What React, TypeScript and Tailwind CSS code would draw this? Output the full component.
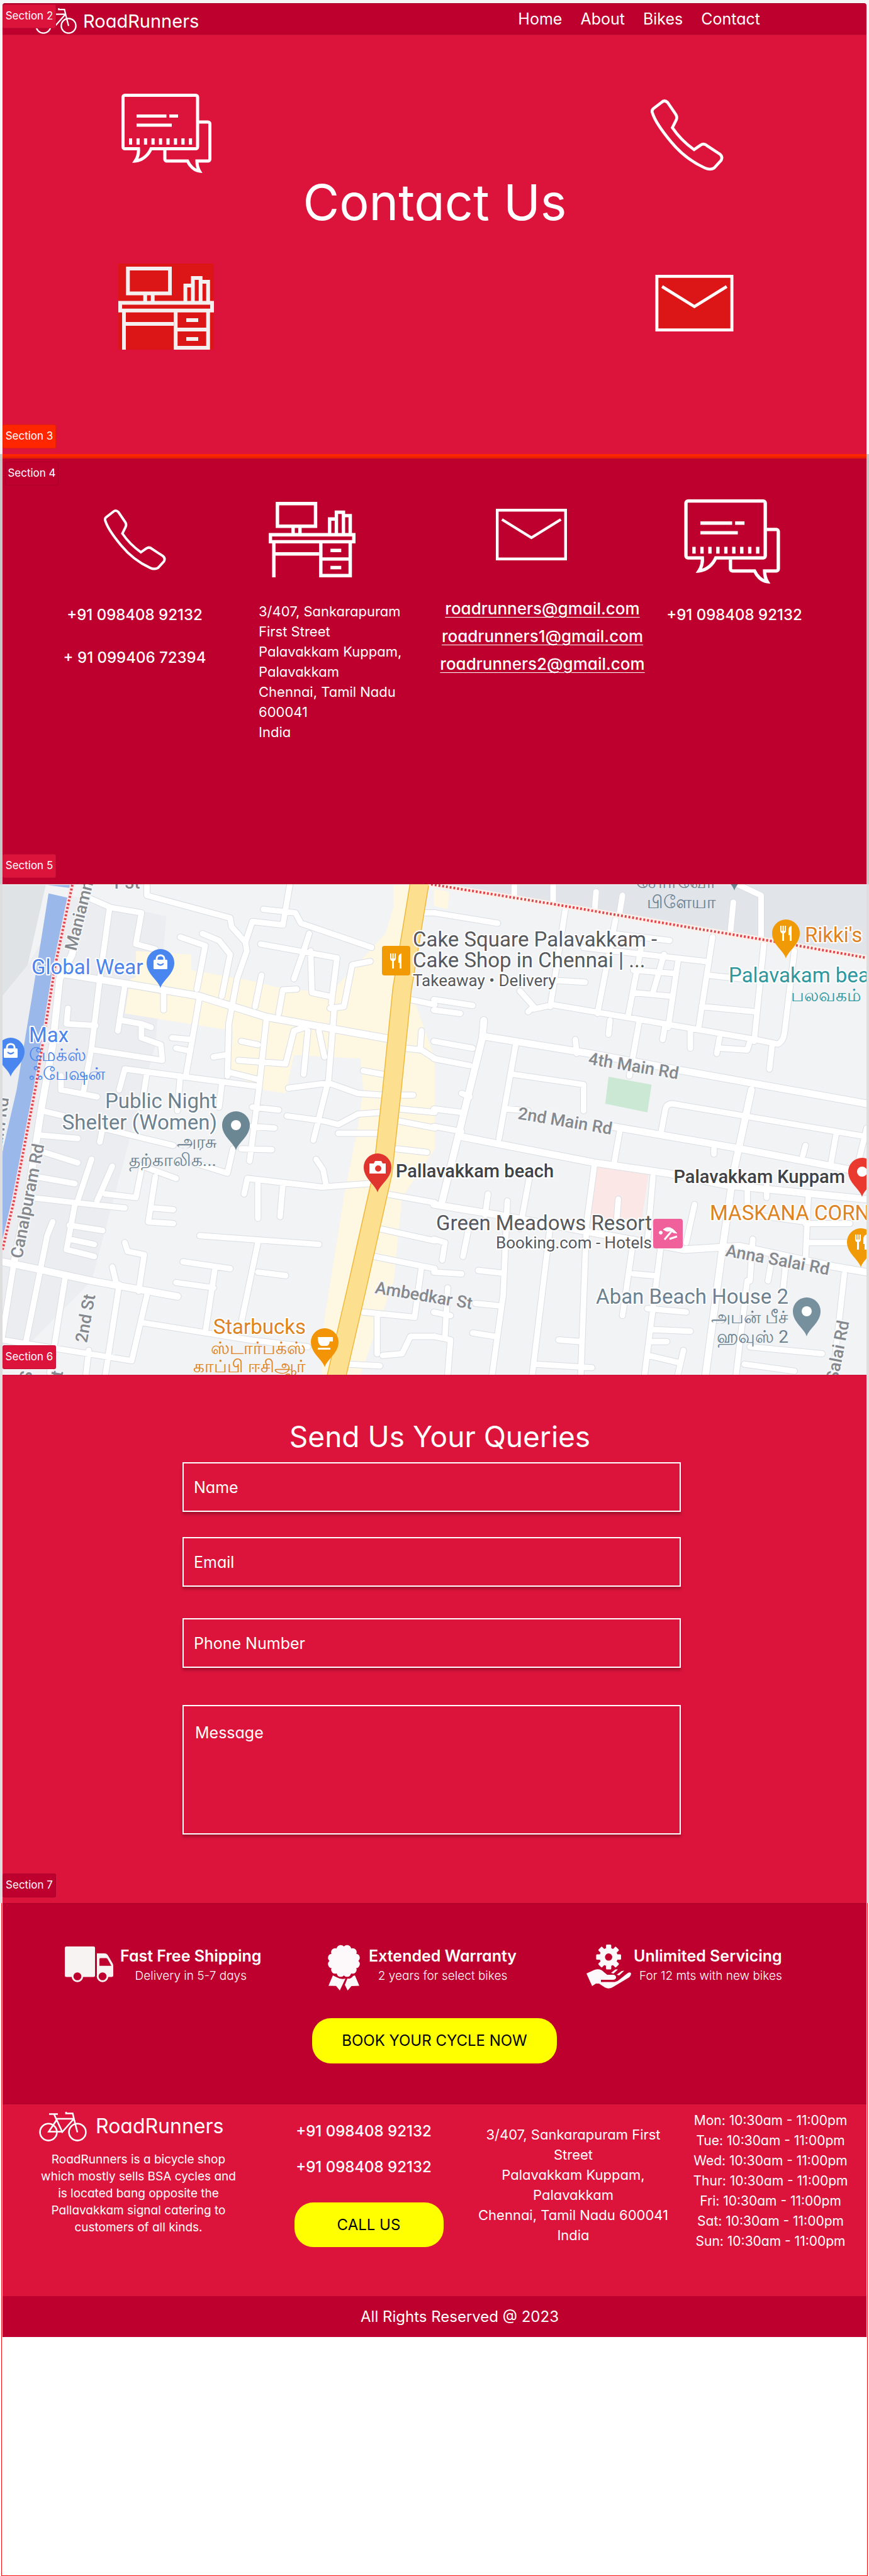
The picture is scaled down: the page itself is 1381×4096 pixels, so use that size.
import React from "react";

const FONT = "font-['Inter','Liberation_Sans',sans-serif] [font-feature-settings:'cv11']";

function Tag({ children, className }: { children: React.ReactNode; className: string }) {
  return (
    <span
      className={`absolute z-10 flex h-[38px] w-[85px] items-center justify-center rounded-[3px] border border-black/10 text-[17px] font-normal whitespace-nowrap text-white [font-feature-settings:normal] ${className}`}
    >
      {children}
    </span>
  );
}

function Bike({ className }: { className: string }) {
  return (
    <svg viewBox="0 0 76 48" className={className} fill="none" stroke="currentColor" strokeWidth="2.6" aria-hidden="true">
      <circle cx="15" cy="33.2" r="13.4" />
      <circle cx="61" cy="33.2" r="13.4" />
      <path d="M16 4.5H30M24 5L37 33L55 12.5M26 12H55.5M28.5 13L15.5 32.5H37M43 1V3.5H53.5L56 14L61 33.5" />
    </svg>
  );
}

function Chat({ className }: { className: string }) {
  return (
    <svg viewBox="0 0 143 126" className={className} fill="none" stroke="currentColor" strokeWidth="5" aria-hidden="true">
      <path d="M27 87.5H5.5a3 3 0 0 1-3-3V5.5a3 3 0 0 1 3-3H118a3 3 0 0 1 3 3V84.5a3 3 0 0 1-3 3H47C43 97 34 106 22 107C26 101 27.5 94 27 87.5Z" />
      <path d="M123 45H137.5a3 3 0 0 1 3 3V104a3 3 0 0 1-3 3H120C120 113 121 118 124 123C115 122 108 114 105 107H72a3 3 0 0 1-3-3V90" />
      <path d="M24 35.5H71.5M76 35.5H90M24 50H80" />
      <path d="M12 76H113" strokeWidth="10" strokeDasharray="5 6.9" />
    </svg>
  );
}

function Phone({ className }: { className: string }) {
  return (
    <svg viewBox="0 0 116 114" className={className} fill="none" stroke="currentColor" strokeWidth="4.6" aria-hidden="true">
      <path d="M17 5Q22 0 27 5L40 24Q43 29 40 34L34.5 45Q48 65 69 80L79 73Q85 69 90 74L110 87Q115 91 112 97L101 109Q95 113 86 109Q55 95 32 67Q8 38 3 22Q1 18 4 15Z" />
    </svg>
  );
}

function Desk({ className, viewBox }: { className: string; viewBox: string }) {
  return (
    <svg viewBox={viewBox} className={className} fill="none" stroke="currentColor" strokeWidth="6" aria-hidden="true">
      <path d="M15.3 8H82V47.5H15.3ZM42.7 50V60M54.7 50V60" />
      <path d="M106.6 60V35H118.5M118.5 60V23H130.8V60M130.8 29H142.7V60" />
      <path d="M3 62.5H149V74.7H3ZM9 77V137M91.2 77V134H142.7V77M12 96H88M94 105H140M108 90H127M108 120H127" />
    </svg>
  );
}

function Mail({ className }: { className: string }) {
  return (
    <svg viewBox="0 0 113 82" className={className} fill="none" stroke="currentColor" strokeWidth="4.4" aria-hidden="true">
      <path d="M2.2 2.2H110.8V79.8H2.2ZM9.7 17L56.5 46L103.3 17" />
    </svg>
  );
}

function Truck() {
  return (
    <svg viewBox="0 0 77 57" className="mt-[3px] h-[57px] w-[77px]" fill="#f8f3f3" aria-hidden="true">
      <rect width="48" height="48.5" rx="2.5" />
      <path
        fillRule="evenodd"
        d="M51 11H63Q67 11 69 15L76 27Q77 29 77 31V46Q77 48.5 74 48.5H51ZM56.5 18.5Q55 18.5 55 20V30.7H74L68 20Q67 18.5 66 18.5Z"
      />
      <circle cx="20" cy="47.5" r="9.2" />
      <circle cx="60" cy="47.5" r="9.2" />
      <circle cx="20" cy="47.5" r="6.3" fill="#be002f" />
      <circle cx="60" cy="47.5" r="6.3" fill="#be002f" />
    </svg>
  );
}

function Rosette() {
  const lobes = Array.from({ length: 12 }, (_, i) => (i * Math.PI) / 6 + Math.PI / 12);
  return (
    <svg viewBox="0 0 53 73" className="h-[73px] w-[53px]" fill="#fdf8fa" aria-hidden="true">
      <circle cx="26.5" cy="26" r="22.5" />
      {lobes.map((a) => (
        <circle key={a} cx={26.5 + 19.5 * Math.cos(a)} cy={26 + 19.5 * Math.sin(a)} r="6.5" />
      ))}
      <path d="M9 49L2 65.5L14 65.8L20 73L29 54Q22 56 15 52ZM44 49L51 65.5L38.5 66L32.5 73L28 64L32 54Q38 55 41 50Z" />
    </svg>
  );
}

function HandGear() {
  return (
    <svg viewBox="0 0 71 70" className="h-[70px] w-[71px]" aria-hidden="true">
      <g fill="#fdf8fa">
        {[0, 45, 90, 135].map((a) => (
          <rect key={a} x="31" y="0" width="8.4" height="39.6" rx="1.5" transform={`rotate(${a} 35.2 19.8)`} />
        ))}
        <circle cx="35.2" cy="19.8" r="14.5" />
        <path d="M0 46L12 40.5Q22 37 28 44L33 48H43Q47.5 49 47 53Q46 56 42 56H23V59.5H45Q49 59 52 56L66 45Q70 43 71 46Q71 49 68 52L43 67Q36 72 29 68L20 62H15L9 66Z" />
        <path d="M39 45L46 39.5H50L43 46ZM48 48L56 42L60 41.5L52 49Z" />
      </g>
      <circle cx="35.2" cy="19.8" r="5.8" fill="#be002f" />
    </svg>
  );
}

function Pin({ x, y, color, children }: { x: number; y: number; color: string; children?: React.ReactNode }) {
  return (
    <g transform={`translate(${x} ${y})`}>
      <path d="M0 40C-3 28 -22 18 -22 0A22 22 0 0 1 22 0C22 18 3 28 0 40Z" fill={color} />
      {children ?? <circle r="8" fill="#fff" />}
    </g>
  );
}

const Bag = () => (
  <g fill="none" stroke="#fff" strokeWidth="3">
    <rect x="-11" y="-5" width="22" height="15" rx="1.5" fill="#fff" stroke="none" />
    <path d="M-6 -5V-7A6 5 0 0 1 6 -7V-5" />
    <path d="M-5 1Q0 6 5 1" stroke="#4a86f0" strokeWidth="2.2" />
  </g>
);

const Fork = () => (
  <path
    d="M-9 -12V-4Q-9 -1 -6 0V12H-3V0Q0 -1 0 -4V-12H-2V-4H-3.5V-12H-5.5V-4H-7V-12ZM9 -12Q4 -11 4 -4V3H6V12H9Z"
    fill="#fff"
  />
);

const STREETS_WEST =
  "M300 130L400 165L510 180L490 270L560 285M395 165L360 370M530 100V130L830 195L835 220L885 265L910 205L1020 215L1045 100M950 170L1065 180L1085 210L1340 280M940 270L1215 310L1195 440M1115 240L1095 290L1060 370M1120 290L1125 410L1185 420M1335 320L1270 330L1240 450L1190 455M885 265L890 290L855 370L825 500L820 650M650 250L740 275L710 400M730 240L790 260L830 300L800 420M590 400V460M943 360L920 450M1070 400L1020 402L1005 470M360 370L330 570L300 700M450 390L425 520M245 455L240 500L345 505M440 490L510 500L545 510M510 500V540L580 560L585 605L340 575M720 420L690 560L670 650M620 540L690 545M635 570L685 578M430 690L450 630L930 680M530 640L510 740M650 650L640 750M800 670L790 740M960 490L935 680L900 895M870 550L930 560M860 605L1030 615L1060 520L1100 510M1205 460L1185 660L1130 835M1110 520L1095 645M1150 520L1170 595M1040 685L1185 670L1290 700L1380 705M1035 765L1170 780L1220 790L1290 760L1375 755M1220 815H1360M770 595L810 590M830 640L930 660M150 750L230 765M140 820L280 830M220 650V690L350 710M360 840L370 800L520 830L625 850M160 870L280 900M130 940L270 960M110 1000L330 1020L450 1030M270 1020L240 1150L340 1170M250 1080L370 1095M250 1120L340 1135M330 890L280 1010M405 910L350 1010M510 920L490 1000L380 990M560 940L535 1070L625 1075M550 1030L625 1035M480 900L635 945M840 860L820 930L700 900M870 860L980 862M910 740L1005 748M910 795L990 800M720 1110L1150 1135M930 1130L870 1360M930 1215L1030 1225M450 1130L460 1155L520 1165L500 1270M405 1200L420 1250M660 1185L830 1205M635 1245L770 1260M775 1205L740 1390M190 1070L170 1110L90 1430M235 1230L180 1505M430 1250L380 1510M530 1280L475 1470L8 1410M320 1440L310 1510M50 1190L8 1400M510 1360L900 1410L1110 1430M880 990L892 945L1160 970L1330 960M930 960V1060M1020 960L1010 1055M1140 890L1165 920L1175 960M1480 430L1568 445M1530 180H1568M1460 570L1520 575L1568 600M1520 520L1515 575M1450 705H1490M1440 745L1568 755M1440 780L1568 800M1430 860L1540 870M1395 990L1568 1015M1370 1090L1568 1125M1350 1170L1568 1205M1310 1330L1495 1345L1520 1200M1360 1340V1450M1568 1400L1480 1400L1450 1450L1380 1455M1250 1480L1370 1485M1310 635L1380 645";

const STREETS_EAST =
  "M0 180L230 210M475 165L420 450M655 200L590 470M540 280L980 320M640 240L850 260M750 270L700 480M1005 250L955 510M1190 270L1155 550M990 360L1170 375M965 450L1160 465M720 410L850 420M720 345L870 355M830 300L790 410M880 320L845 510M310 405L360 450L340 465M360 457L430 445L760 490L1160 545L1240 558Q1262 550 1265 520L1300 290M440 375L545 380M0 430L140 447M0 460L95 470M635 490L630 530M740 495L705 650M835 500L825 545M925 520V570M1030 540L1020 585M1035 570L1130 575L1140 550M1220 560L1210 630M510 545L515 585M0 550L140 570M0 600L130 620M0 745L100 755M0 795L100 810M100 700L130 710M295 560L235 830M285 645L540 675V750M260 745L340 750M820 810L835 745Q840 730 860 730L1561 825M670 810L650 900M1450 820L1430 910M1561 800L1530 900M1340 850L1330 880M1010 860V875M345 940L310 1090M265 1010L250 1280L210 1510M195 990L185 1050M130 1070L105 1170M0 1120L40 1130L30 1180M0 1215L100 1220M420 1080L355 1510M580 900L550 1080L530 1510M665 1005L660 1060M790 940L770 1130M720 1120L680 1340M720 1220L790 1225M820 1130L760 1510M940 1020L910 1130M1060 960L1145 970M1060 1040L1340 1070M1130 980V1040M1200 960V1000M1350 1000L1340 1180M1150 1120L1140 1240M1220 1170L1205 1240M1270 1180L1260 1260M1340 1075H1500M1350 1130H1500M1480 1220L1440 1510M160 1210L250 1218M140 1390L220 1400M150 1305L240 1312M360 1480L570 1490M450 1410L530 1415M770 1320L910 1330M780 1380L925 1385M780 1415H840M775 1455L880 1475M900 1440L880 1510M1130 1240L1090 1510M0 1330L60 1340M50 1260L40 1400M0 1400L60 1410L50 1510M1140 1430L1400 1450M1120 1480L1300 1500M430 100V150M290 100V130M585 120L580 170M680 130L670 180M1080 150L1070 230M1100 100L1180 130V250";

const MAJOR_WEST =
  "M310 100L260 300L215 370L190 560L150 740L100 1000L50 1190M225 355L460 385L720 420L960 480L1395 542M8 1185L130 1205L330 1240L640 1285";
const MAJOR_EAST =
  "M180 490L175 540L30 1010M175 535L560 585L900 635L1561 730M100 825L580 900L840 930L1060 965L1561 1005M640 795L1110 860L1500 920M0 1020L230 1050L800 1135L900 1150L1100 1140L1450 1200L1561 1215M1145 690L1080 930L1040 1150L980 1510";

const WEST = "matrix(.4407 0 0 .5521 -4 -54)";
const EAST = "matrix(.4407 0 0 .5521 685.5 -54)";

function CityMap() {
  return (
    <svg
      viewBox="0 0 1373 780"
      className="block h-auto w-full font-['Roboto','Noto_Sans',sans-serif]"
      role="img"
      aria-label="Map of Palavakkam"
    >
      <rect width="1373" height="780" fill="#f1f3f5" />
      {/* tinted blocks, canal and sea front */}
      <g transform={WEST}>
        <path d="M8 100H165L100 330L8 640Z" fill="#dfe3e6" />
        <path d="M8 420L100 330L250 130L600 190L560 560L330 1240L8 1500Z" fill="#ebedf0" />
        <path
          d="M490 290L690 300L690 345L900 375L1000 395L1190 412L1390 240L1420 160V100H1500L1400 560L1380 700L1310 690L1300 600L1060 590L1030 700L950 690L830 640L840 520L450 470L470 370L490 365Z"
          fill="#fef7e2"
        />
        <path d="M1400 690L1310 690L1290 800L1240 1000L1170 1350L1160 1510H1300L1420 1240L1450 1000L1568 860V600L1480 400Z" fill="#fef7e2" />
        <path d="M175 124L247 137L210 290L130 670L20 1115L8 1130V870L60 690L120 400ZM170 100H262L250 108Z" fill="#9ab8ea" />
      </g>
      <g transform={EAST}>
        <path d="M0 100L1561 310V100Z" fill="#e1e4e8" />
        <path d="M0 110L55 120L50 170L0 160Z" fill="#fef7e2" />
        <path d="M585 905L775 930L750 1062L555 1062Z" fill="#fbe8e6" />
      </g>
      {/* street network: casing first, then the white carriageway */}
      <g fill="none" strokeLinecap="round" strokeLinejoin="round">
        <g stroke="#dadde2">
          <g transform={WEST}>
            <path d={STREETS_WEST} strokeWidth="11" vectorEffect="non-scaling-stroke" />
            <path d={MAJOR_WEST} strokeWidth="13" vectorEffect="non-scaling-stroke" />
          </g>
          <g transform={EAST}>
            <path d={STREETS_EAST} strokeWidth="11" vectorEffect="non-scaling-stroke" />
            <path d={MAJOR_EAST} strokeWidth="13" vectorEffect="non-scaling-stroke" />
          </g>
        </g>
        <g stroke="#fff">
          <g transform={WEST}>
            <path d={STREETS_WEST} strokeWidth="9" vectorEffect="non-scaling-stroke" />
            <path d={MAJOR_WEST} strokeWidth="11" vectorEffect="non-scaling-stroke" />
          </g>
          <g transform={EAST}>
            <path d={STREETS_EAST} strokeWidth="9" vectorEffect="non-scaling-stroke" />
            <path d={MAJOR_EAST} strokeWidth="11" vectorEffect="non-scaling-stroke" />
          </g>
        </g>
        <g transform={WEST}>
          <path d="M1514 90L1450 400L1412 700L1380 930L1290 1250L1212 1520" stroke="#eeb93c" strokeWidth="31" vectorEffect="non-scaling-stroke" />
          <path d="M1514 90L1450 400L1412 700L1380 930L1290 1250L1212 1520" stroke="#fce08f" strokeWidth="28" vectorEffect="non-scaling-stroke" />
          <path d="M260 100L200 330L130 680L50 1010L8 1150" stroke="#fbe3e6" strokeWidth="7" vectorEffect="non-scaling-stroke" />
        </g>
        <g transform={EAST}>
          <path d="M-10 98L465 160L860 214L1240 265L1561 310" stroke="#fbf1ea" strokeWidth="9" vectorEffect="non-scaling-stroke" />
        </g>
      </g>
      <g fill="none" stroke="#e0454e" strokeWidth="4" strokeDasharray="3 3">
        <path d="M111 1L84 128L53 321L18 504L0 581" />
        <path d="M681 0L890 34L1064 64L1232 92L1373 117" />
      </g>
      <g transform={EAST}>
        <path d="M630 652L785 675L770 755L618 730Z" fill="#cbe8d5" />
      </g>

      {/* street names */}
      <g fill="#85898e" fontSize="27" fontWeight="500" stroke="#f6f7f9" strokeWidth="4" paintOrder="stroke" strokeLinejoin="round">
        <text transform="translate(930 286) rotate(9.500)">4th Main Rd</text>
        <text transform="translate(818 373) rotate(9.500)">2nd Main Rd</text>
        <text transform="translate(1148 591) rotate(10.500)">Anna Salai Rd</text>
        <text transform="translate(591 650) rotate(9.500)">Ambedkar St</text>
        <text transform="translate(31 596) rotate(-79)">Canalpuram Rd</text>
        <text transform="translate(117 107) rotate(-76)">Maniamm</text>
        <text transform="translate(134 730) rotate(-80)">2nd St</text>
        <text transform="translate(92 800) rotate(-80)">St</text>
        <text transform="translate(45 792) rotate(-80)">S</text>
        <text transform="translate(1327 792) rotate(-79)">Salai Rd</text>
        <text transform="translate(-4 440) rotate(-82)">uram Rd</text>
        <text x="178" y="7">r 3t</text>
      </g>

      {/* place names */}
      <g fontSize="33" stroke="#fff" strokeWidth="4" paintOrder="stroke" strokeLinejoin="round">
        <g fill="#4b84ea">
          <text x="46" y="143">Global Wear</text>
          <text x="42" y="251">Max</text>
        </g>
        <g fill="#6c8290" textAnchor="end">
          <text x="341" y="356">Public Night</text>
          <text x="341" y="390">Shelter (Women)</text>
          <text x="1249" y="667">Aban Beach House 2</text>
        </g>
        <g fill="#56595d">
          <text x="652" y="99">Cake Square Palavakkam -</text>
          <text x="652" y="132">Cake Shop in Chennai | ...</text>
          <text x="652" y="162" fontSize="26">Takeaway • Delivery</text>
          <text x="1032" y="550" textAnchor="end">Green Meadows Resort</text>
          <text x="1032" y="579" fontSize="26" textAnchor="end">Booking.com - Hotels</text>
        </g>
        <g fill="#3f4246" fontSize="29" fontWeight="500">
          <text x="625" y="466">Pallavakkam beach</text>
          <text x="1339" y="475" textAnchor="end">Palavakkam Kuppam</text>
        </g>
        <g fill="#df8322">
          <text x="1275" y="92">Rikki's</text>
          <text x="1124" y="534">MASKANA CORN</text>
          <text x="482" y="715" textAnchor="end">Starbucks</text>
        </g>
        <text x="1154" y="156" fill="#2f989f">Palavakam bea</text>
      </g>

      {/* Tamil place names */}
      <g fontSize="28">
        <g fill="#4b84ea">
          <text x="42" y="281">மேக்ஸ்</text>
          <text x="42" y="311">ஃபேஷன்</text>
        </g>
        <g fill="#6c8290" textAnchor="end">
          <text x="340" y="419">அரசு</text>
          <text x="340" y="448">தற்காலிக...</text>
          <text x="1249" y="698">அபன் பீச்</text>
          <text x="1249" y="729">ஹவுஸ் 2</text>
          <text x="1134" y="6">சோர்வோ</text>
          <text x="1134" y="38">பிளேயா</text>
        </g>
        <g fill="#df8322" textAnchor="end">
          <text x="482" y="747">ஸ்டார்பக்ஸ்</text>
          <text x="482" y="776">காப்பி ஈசிஆர்</text>
        </g>
        <text x="1253" y="186" fill="#2f989f">பலவகம்</text>
      </g>

      <Pin x={251} y={125} color="#4a86f0">
        <Bag />
      </Pin>
      <Pin x={13} y={266} color="#4a86f0">
        <Bag />
      </Pin>
      <Pin x={371} y={383} color="#6c8794" />
      <Pin x={1278} y={679} color="#76909d" />
      <Pin x={1163} y={-30} color="#6c8794" />
      <Pin x={1366} y={457} color="#ea3a2f" />
      <Pin x={1245} y={78} color="#f09a08">
        <Fork />
      </Pin>
      <Pin x={1364} y={569} color="#f09a08">
        <Fork />
      </Pin>
      <Pin x={596} y={450} color="#e0352f">
        <path fillRule="evenodd" d="M-13 -6H-6L-4 -10H6L8 -6H13V10H-13ZM1 -3A5 5 0 1 0 1 7A5 5 0 1 0 1 -3Z" fill="#fff" />
      </Pin>
      <Pin x={512} y={728} color="#f29405">
        <path d="M-11 -8H13V-1H8Q7 6 3 6H-5Q-11 5 -11 -8ZM-11 9H9V12H-11Z" fill="#fff" />
      </Pin>
      <rect x="603" y="98" width="45" height="47" rx="4" fill="#f29a04" />
      <g transform="translate(625 122)">
        <Fork />
      </g>
      <rect x="1034" y="532" width="47" height="47" rx="4" fill="#f0609b" />
      <g fill="#fff" stroke="#fff">
        <circle cx="1046" cy="554" r="2.500" />
        <path d="M1050 549Q1060 540 1072 555L1066 554L1062 551L1056 552Z" />
        <path d="M1063 552L1052 565M1060 564L1072 560" strokeWidth="3" />
      </g>
    </svg>
  );
}

function Field({ id, label, type }: { id: string; label: string; type: string }) {
  return (
    <div>
      <label htmlFor={id} className="sr-only">
        {label}
      </label>
      <input
        id={id}
        type={type}
        placeholder={label}
        className="block h-[79px] w-full border-2 border-white bg-[#dc143b] px-4 text-[25px] text-white shadow-[0_4px_4px_rgba(0,0,0,0.25)] outline-none placeholder:text-white placeholder:opacity-100"
      />
    </div>
  );
}

const HOURS = ["Mon", "Tue", "Wed", "Thur", "Fri", "Sat", "Sun"];
const EMAILS = ["roadrunners@gmail.com", "roadrunners1@gmail.com", "roadrunners2@gmail.com"];
const NAV = ["Home", "About", "Bikes", "Contact"];

export default function App() {
  return (
    <div className={`${FONT} overflow-hidden bg-[#f5f5f5] pt-[5px] text-white`}>
      <div className="relative px-1">
        <Tag className="top-[2px] left-1 bg-[#dc143b]">Section 2</Tag>
        <header className="flex h-[50px] items-center rounded-t-sm border-t border-[#a80029] bg-[#be002f] pr-[169px] pl-[52px]">
          <a href="#home" className="flex items-center gap-[10px]">
            <Bike className="mt-1 h-[42px] w-[66px]" />
            <span className="mt-[6px] text-[29px] leading-8">RoadRunners</span>
          </a>
          <nav className="ml-auto flex gap-[29px] text-[25px]">
            {NAV.map((n) => (
              <a key={n} href={`#${n.toLowerCase()}`}>
                {n}
              </a>
            ))}
          </nav>
        </header>
      </div>

      <div className="relative px-1">
        <section className="flex items-start justify-between border-t border-[#c91237] bg-[#dc143b] pt-[93px] pr-[211px] pb-[166px] pl-[184px]">
          <div className="flex flex-col items-center gap-[144px]">
            <Chat className="h-[126px] w-[143px]" />
            <Desk viewBox="0 0 152 137" className="h-[137px] w-[152px] bg-[#dc1616] text-[#f4f0ef]" />
          </div>
          <h1 className="mt-[132px] flex-1 pl-2 text-center text-[79px] leading-[80px] font-normal">Contact Us</h1>
          <div className="mt-[9px] flex flex-col items-end gap-[165px]">
            <Phone className="mr-4 h-[114px] w-[116px]" />
            <Mail className="h-[90px] w-[125px] bg-[#dc1616]" />
          </div>
        </section>
        <Tag className="bottom-[9px] left-1 bg-[#ff2600]">Section 3</Tag>
      </div>

      <div className="bg-[#c6c6c6]">
        <div className="relative px-1">
          <div className="h-[7px] border-b-[3px] border-[#e82200] bg-[#ff2600]" />
          <section className="grid grid-cols-[388fr_282fr_344fr_266fr] bg-[#be002f] pt-[65px] pr-[77px] pb-[226px] pl-4">
            <div className="flex flex-col items-center">
              <div className="h-[134px] pt-[15px]">
                <Phone className="h-[99px] w-[99px]" />
              </div>
              <div className="mt-8 flex flex-col items-center gap-8 text-2xl leading-9 font-medium whitespace-nowrap">
                <p>+91 098408 92132</p>
                <p>+ 91 099406 72394</p>
              </div>
            </div>
            <div className="pl-[3px]">
              <div className="h-[134px] pt-1 pl-4">
                <Desk viewBox="0 5 152 132" className="h-[120px] w-[138px]" />
              </div>
              <address className="mt-7 text-[22px] leading-8 whitespace-nowrap not-italic">
                3/407, Sankarapuram
                <br />
                First Street
                <br />
                Palavakkam Kuppam,
                <br />
                Palavakkam
                <br />
                Chennai, Tamil Nadu
                <br />
                600041
                <br />
                India
              </address>
            </div>
            <div className="flex flex-col items-center">
              <div className="h-[134px] pt-[15px] pr-9">
                <Mail className="h-[82px] w-[113px]" />
              </div>
              <div className="mt-[22px] flex flex-col items-center gap-2 text-[26px] leading-9 font-medium">
                {EMAILS.map((e) => (
                  <a key={e} href={`mailto:${e}`} className="underline decoration-1 underline-offset-4">
                    {e}
                  </a>
                ))}
              </div>
            </div>
            <div className="flex flex-col items-center">
              <div className="h-[134px] pr-2">
                <Chat className="h-[134px] w-[155px]" />
              </div>
              <p className="mt-8 text-2xl leading-9 font-medium whitespace-nowrap">+91 098408 92132</p>
            </div>
          </section>
          <Tag className="top-3 left-2 bg-[#be002f]">Section 4</Tag>
          <Tag className="bottom-[10px] left-1 bg-[#dc143b]">Section 5</Tag>
        </div>

        <div className="relative bg-[#dedede] px-1">
          <CityMap />
          <Tag className="bottom-[9px] left-1 bg-[#dc143b]">Section 6</Tag>
        </div>

        <div className="relative bg-[#dedede] px-1">
          <section className="border-t border-[#c91237] bg-[#dc143b] pt-[69px] pr-[9px] pb-[109px]">
            <h2 className="pl-[26px] text-center text-[46px] leading-[56px] font-normal">Send Us Your Queries</h2>
            <form className="mx-auto mt-[13px] w-full max-w-[792px]">
              <Field id="name" label="Name" type="text" />
              <div className="mt-10">
                <Field id="email" label="Email" type="email" />
              </div>
              <div className="mt-[50px]">
                <Field id="phone" label="Phone Number" type="tel" />
              </div>
              <div className="mt-[59px]">
                <label htmlFor="message" className="sr-only">
                  Message
                </label>
                <textarea
                  id="message"
                  placeholder="Message"
                  className="block h-[206px] w-full resize-none border-2 border-white bg-[#dc143b] px-[18px] pt-6 text-[25px] leading-9 text-white shadow-[0_4px_4px_rgba(0,0,0,0.25)] outline-none placeholder:text-white placeholder:opacity-100"
                />
              </div>
            </form>
          </section>
          <Tag className="bottom-[9px] left-1 bg-[#be002f]">Section 7</Tag>
        </div>
      </div>

      <div className="bg-white px-[2px]">
        <div className="border-x border-b border-[#ff0a0a] px-px">
          <section className="border-y border-[#ab002a] bg-[#be002f] pt-[65px] pb-16">
            <div className="grid grid-cols-[417fr_412fr_445fr] pl-[99px] whitespace-nowrap">
              <div className="flex gap-[11px]">
                <Truck />
                <div className="pt-[2px] text-center">
                  <h3 className="text-[25px] leading-8 font-semibold">Fast Free Shipping</h3>
                  <p className="text-[19px] leading-8 font-light">Delivery in 5-7 days</p>
                </div>
              </div>
              <div className="flex gap-[13px]">
                <Rosette />
                <div className="pt-[2px] text-center">
                  <h3 className="text-[25px] leading-8 font-semibold">Extended Warranty</h3>
                  <p className="text-[19px] leading-8 font-light">2 years for select bikes</p>
                </div>
              </div>
              <div className="flex gap-1">
                <HandGear />
                <div className="pt-[2px] text-right">
                  <h3 className="text-[25px] leading-8 font-semibold">Unlimited Servicing</h3>
                  <p className="text-[19px] leading-8 font-light">For 12 mts with new bikes</p>
                </div>
              </div>
            </div>
            <button className="mx-auto mt-11 block h-[72px] w-[389px] rounded-[30px] bg-[#ffff00] text-2xl text-black">
              BOOK YOUR CYCLE NOW
            </button>
          </section>

          <footer>
            <div className="grid grid-cols-[404fr_328fr_322fr_305fr] bg-[#dc143b] pb-[71px] pl-[14px] whitespace-nowrap">
              <div className="pt-[11px]">
                <div className="flex items-center gap-[14px] pl-[44px]">
                  <Bike className="h-[48px] w-[76px]" />
                  <span className="text-[32px] leading-10">RoadRunners</span>
                </div>
                <p className="mt-[15px] text-center text-[19px] leading-[27px]">
                  RoadRunners is a bicycle shop
                  <br />
                  which mostly sells BSA cycles and
                  <br />
                  is located bang opposite the
                  <br />
                  Pallavakkam signal catering to
                  <br />
                  customers of all kinds.
                </p>
              </div>
              <div className="flex flex-col items-center pt-[25px]">
                <div className="flex flex-col gap-[21px] pr-4 text-2xl leading-9 font-medium">
                  <p>+91 098408 92132</p>
                  <p>+91 098408 92132</p>
                </div>
                <button className="mt-[38px] h-[71px] w-[237px] rounded-[30px] bg-[#ffff00] text-2xl text-black">CALL US</button>
              </div>
              <address className="pt-8 text-center text-[22px] leading-8 not-italic">
                3/407, Sankarapuram First
                <br />
                Street
                <br />
                Palavakkam Kuppam,
                <br />
                Palavakkam
                <br />
                Chennai, Tamil Nadu 600041
                <br />
                India
              </address>
              <ul className="pt-[10px] text-center text-[21px] leading-8">
                {HOURS.map((d) => (
                  <li key={d}>{d}: 10:30am - 11:00pm</li>
                ))}
              </ul>
            </div>
            <p className="bg-[#be002f] py-[15px] pl-20 text-center text-2xl leading-[35px]">All Rights Reserved @ 2023</p>
          </footer>
          <div className="h-[379px]" />
        </div>
      </div>
    </div>
  );
}
